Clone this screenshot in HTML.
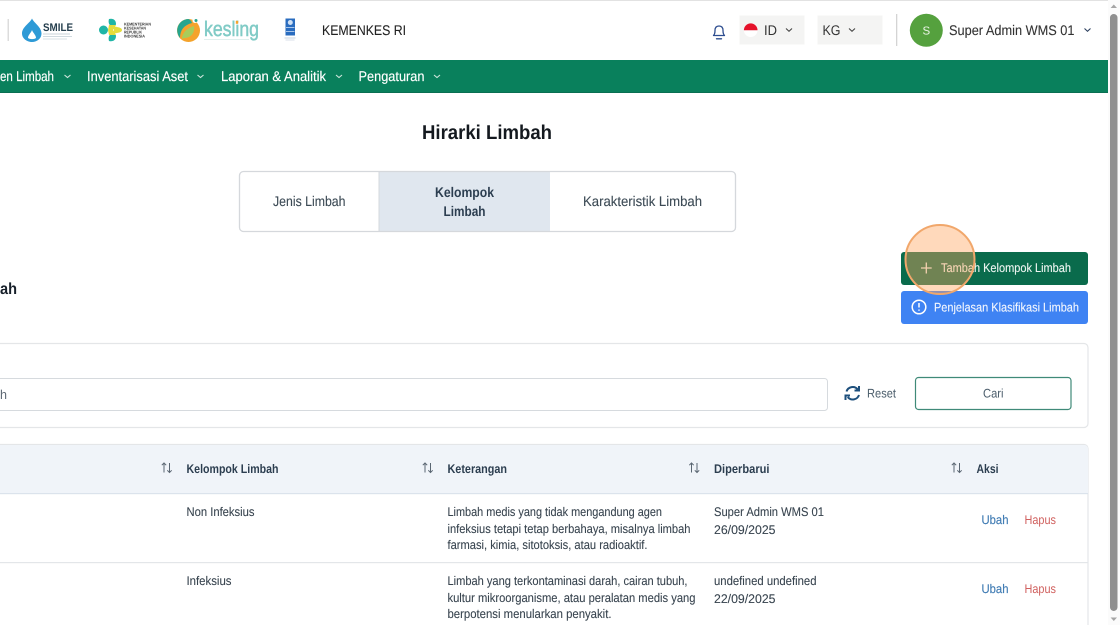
<!DOCTYPE html>
<html lang="id">
<head>
<meta charset="utf-8">
<title>Hirarki Limbah</title>
<style>
html,body{margin:0;padding:0;width:1120px;height:625px;overflow:hidden;background:#fff}
svg{display:block;font-family:"Liberation Sans",sans-serif}
text{text-rendering:geometricPrecision}
.n{font-size:14px;fill:#fff;stroke:#fff;stroke-width:.15}
.h{font-size:12.5px;font-weight:700;fill:#2c3e50}
.c{font-size:12.5px;fill:#38444f;stroke:#38444f;stroke-width:.1}
.t{font-size:14px;fill:#3c4a55;stroke:#3c4a55;stroke-width:.1}
.chev{fill:none;stroke-width:1.1}
.sort{fill:none;stroke:#5a6672;stroke-width:1}
</style>
</head>
<body>
<svg width="1120" height="625" viewBox="0 0 1120 625" xmlns="http://www.w3.org/2000/svg">
<rect width="1120" height="625" fill="#fff"/>
<rect width="1108" height="1" fill="#e2e2e2"/>

<!-- header logos -->
<rect x="7.500" y="19" width="1.500" height="22" fill="#dcdcdc"/>
<path d="M32 18.500C34 23 41.500 27 41.500 33.500C41.500 38.500 37 42 32 42C27 42 22 38.500 22 33.500C22 27 30 23 32 18.500Z" fill="#2e9ad6"/>
<path d="M32 30C33 33 36 35 36 38C34 39.500 30 39.500 28 38C28 35 31 33 32 30Z" fill="#fff"/>
<text x="43" y="31" font-size="11" font-weight="700" fill="#27404f" textLength="30" lengthAdjust="spacingAndGlyphs">SMILE</text>
<rect x="43" y="33.500" width="27" height="1" fill="#c8d3d8"/><rect x="43" y="36" width="29" height="1" fill="#d0dadf"/><rect x="43" y="38.500" width="24" height="1" fill="#d8e0e4"/>

<circle cx="103.500" cy="30" r="4.500" fill="#1fb5a6"/>
<path d="M109 19C113 18 116 20 116 24C116 26 113 27 111 26C109 25 108 22 109 19Z" fill="#1fb5a6"/>
<path d="M109 41C113 42 116 40 116 36C116 34 113 33 111 34C109 35 108 38 109 41Z" fill="#1fb5a6"/>
<path d="M111 26C116 27 122 27 122 30C122 33 116 33 111 34C113 32 114 31 114 30C114 29 113 28 111 26Z" fill="#e4dc3c"/>
<path d="M109 25L116 25L113 30L116 35L109 35L108 30Z" fill="#e4dc3c"/>
<g font-size="4" font-weight="700" fill="#3a3a3a">
<text x="124" y="25.500" textLength="27" lengthAdjust="spacingAndGlyphs">KEMENTERIAN</text>
<text x="124" y="29.500" textLength="22" lengthAdjust="spacingAndGlyphs">KESEHATAN</text>
<text x="124" y="33.500" textLength="18" lengthAdjust="spacingAndGlyphs">REPUBLIK</text>
<text x="124" y="37.500" textLength="21" lengthAdjust="spacingAndGlyphs">INDONESIA</text>
</g>

<circle cx="188.500" cy="30.500" r="11.500" fill="#f4a32c"/>
<path d="M188.500 19A11.500 11.500 0 0 0 180 38C180 30 184 25 192 23A6 6 0 0 0 188.500 19Z" fill="#25a58f"/>
<path d="M182 39C182 33 187 28 194 26C195 33 191 38 184 38Z" fill="#a8cc5a"/>
<circle cx="195" cy="20.500" r="2.500" fill="#fff"/>
<circle cx="196" cy="20.500" r="1.500" fill="#25a58f"/>
<text x="204" y="36" font-size="21" fill="#80cbc6" stroke="#80cbc6" stroke-width=".5" textLength="55" lengthAdjust="spacingAndGlyphs">kesling</text>
<rect x="235.800" y="20.800" width="2.400" height="3" fill="#f4a32c"/>
<rect x="204" y="39" width="45" height="1" fill="#e0f0ee"/>

<rect x="285.500" y="18.500" width="9.500" height="17" fill="#2a6cbf"/>
<circle cx="290.300" cy="22.500" r="2.500" fill="#cfe0f4"/>
<path d="M286 27.500h8.500M286 31.500h8.500" stroke="#a9c6ea" stroke-width="1"/>
<rect x="284.500" y="37.500" width="11" height="1" fill="#c7d3e0"/><rect x="285.500" y="39.500" width="9" height="1" fill="#d8dfe8"/>

<text x="322" y="35" font-size="14" fill="#222" stroke="#222" stroke-width=".1" textLength="84" lengthAdjust="spacingAndGlyphs">KEMENKES RI</text>

<!-- right header -->
<path d="M713.500 35.500C715 34 715 32 715 30.500C715 27.500 716.500 26 719 26C721.500 26 723 27.500 723 30.500C723 32 723 34 724.500 35.500Z" fill="none" stroke="#2d4d8f" stroke-width="1.300" stroke-linejoin="round"/>
<path d="M716.500 38.800H721.500" stroke="#2d4d8f" stroke-width="1.300" stroke-linecap="round"/>

<rect x="739.500" y="15.500" width="65" height="29" fill="#f4f4f3"/>
<circle cx="750.700" cy="30.200" r="6.800" fill="#fff"/>
<path d="M743.900 30.200A6.800 6.800 0 0 1 757.500 30.200Z" fill="#e5122a"/>
<text x="764" y="35" font-size="14" fill="#333" textLength="13" lengthAdjust="spacingAndGlyphs">ID</text>
<path d="M786 28.500l3 2.800 3-2.800" class="chev" stroke="#444"/>

<rect x="817.500" y="15.500" width="65" height="29" fill="#f4f4f3"/>
<text x="822.500" y="35" font-size="14" fill="#333" textLength="18" lengthAdjust="spacingAndGlyphs">KG</text>
<path d="M849 28.500l3 2.800 3-2.800" class="chev" stroke="#444"/>

<rect x="896" y="14" width="1.300" height="32" fill="#d4d4d4"/>
<circle cx="926.300" cy="30.300" r="16.500" fill="#55a13e"/>
<text x="926.300" y="34.500" font-size="11.500" fill="#e9f3e4" text-anchor="middle">S</text>
<text x="949" y="35" font-size="14" fill="#333" stroke="#333" stroke-width=".1" textLength="125.500" lengthAdjust="spacingAndGlyphs">Super Admin WMS 01</text>
<path d="M1084.500 28.500l3 2.800 3-2.800" class="chev" stroke="#2c3f5e" stroke-width="1.300"/>

<!-- nav -->
<rect y="60" width="1108" height="33" fill="#09805c"/>
<rect y="92" width="1108" height="1" fill="#0a6f52"/>
<text class="n" x="0" y="81" textLength="54" lengthAdjust="spacingAndGlyphs">en Limbah</text>
<path d="M64.500 75l3 2.500 3-2.500" class="chev" stroke="#cfe6dc"/>
<text class="n" x="87" y="81" textLength="101" lengthAdjust="spacingAndGlyphs">Inventarisasi Aset</text>
<path d="M197.500 75l3 2.500 3-2.500" class="chev" stroke="#cfe6dc"/>
<text class="n" x="221" y="81" textLength="105" lengthAdjust="spacingAndGlyphs">Laporan &amp; Analitik</text>
<path d="M336 75l3 2.500 3-2.500" class="chev" stroke="#cfe6dc"/>
<text class="n" x="358.500" y="81" textLength="66" lengthAdjust="spacingAndGlyphs">Pengaturan</text>
<path d="M434 75l3 2.500 3-2.500" class="chev" stroke="#cfe6dc"/>

<!-- title -->
<text x="422" y="139" font-size="20" font-weight="700" fill="#14191f" textLength="130" lengthAdjust="spacingAndGlyphs">Hirarki Limbah</text>

<!-- tabs -->
<rect x="379" y="172" width="171" height="59" fill="#e0e7ef"/>
<rect x="239.500" y="171.500" width="496" height="60" rx="4" fill="none" stroke="#d5d8dc" stroke-width="1.300"/>
<path d="M379 172V231" stroke="#d5d8dc"/>
<text class="t" x="273" y="206" textLength="72.500" lengthAdjust="spacingAndGlyphs">Jenis Limbah</text>
<text x="435" y="197" font-size="14" font-weight="700" fill="#2c3e50" textLength="59" lengthAdjust="spacingAndGlyphs">Kelompok</text>
<text x="443.500" y="216" font-size="14" font-weight="700" fill="#2c3e50" textLength="42" lengthAdjust="spacingAndGlyphs">Limbah</text>
<text class="t" x="583" y="206" textLength="119" lengthAdjust="spacingAndGlyphs">Karakteristik Limbah</text>

<!-- section title -->
<text x="0" y="294" font-size="16" font-weight="700" fill="#17202a" textLength="17" lengthAdjust="spacingAndGlyphs">ah</text>

<!-- buttons -->
<rect x="901" y="252" width="187" height="33" rx="3" fill="#0a6b4c"/>
<path d="M926.300 262.500v11M921 268h10.700" stroke="#e8f0ea" stroke-width="1.300"/>
<text x="941" y="272" font-size="12.500" fill="#edf5f1" stroke="#edf5f1" stroke-width=".12" textLength="130" lengthAdjust="spacingAndGlyphs">Tambah Kelompok Limbah</text>
<rect x="901" y="291" width="187" height="33" rx="3" fill="#3f83f3"/>
<circle cx="919" cy="307" r="6.800" fill="none" stroke="#fff" stroke-width="1.500"/>
<path d="M919 303v4.500M919 309.500v1.300" stroke="#fff" stroke-width="1.500"/>
<text x="934" y="311.500" font-size="12.500" fill="#f2f6fe" stroke="#f2f6fe" stroke-width=".12" textLength="145" lengthAdjust="spacingAndGlyphs">Penjelasan Klasifikasi Limbah</text>

<!-- search card -->
<rect x="-6" y="343.500" width="1094" height="84" rx="4" fill="#fff" stroke="#e4e6e8" stroke-width="1.200"/>
<rect x="-6" y="378.500" width="833.500" height="32" rx="3" fill="#fff" stroke="#d6dade" stroke-width="1"/>
<text x="0" y="399" font-size="13" fill="#5f6a75" textLength="7" lengthAdjust="spacingAndGlyphs">h</text>
<path d="M846.500 391.500A6.500 6.500 0 0 1 857.800 389.500M859 395A6.500 6.500 0 0 1 847.700 397" fill="none" stroke="#1d4f7c" stroke-width="2"/>
<path d="M859 386v4.500h-4.500M845.500 400v-4.500h4.500" fill="none" stroke="#1d4f7c" stroke-width="2"/>
<text x="867" y="397.500" font-size="12.500" fill="#4b5d6b" textLength="29" lengthAdjust="spacingAndGlyphs">Reset</text>
<rect x="915.500" y="377.500" width="155.500" height="32" rx="3" fill="#fff" stroke="#3f8a78" stroke-width="1.200"/>
<text x="983" y="397.500" font-size="12.500" fill="#4b5d6b" textLength="20.500" lengthAdjust="spacingAndGlyphs">Cari</text>

<!-- table -->
<rect x="-6" y="444.500" width="1094" height="200" rx="4" fill="#fff" stroke="#e4e6e8" stroke-width="1.200"/>
<path d="M-6 493V448.500Q-6 445 -2 445H1084Q1088 445 1088 449V493Z" fill="#f0f4f9"/>
<rect x="0" y="493" width="1088" height="1.200" fill="#dbe3ec"/>
<rect x="0" y="562" width="1088" height="1.200" fill="#e3e6e9"/>

<g>
<path class="sort" d="M164 472.500V463M161.800 465.200L164 463L166.200 465.200M169.500 463V472.500M167.300 470.300L169.500 472.500L171.700 470.300"/>
<path class="sort" d="M425 472.500V463M422.800 465.200L425 463L427.200 465.200M430.500 463V472.500M428.300 470.300L430.500 472.500L432.700 470.300"/>
<path class="sort" d="M691.500 472.500V463M689.300 465.200L691.500 463L693.700 465.200M697 463V472.500M694.800 470.300L697 472.500L699.200 470.300"/>
<path class="sort" d="M954 472.500V463M951.800 465.200L954 463L956.200 465.200M959.500 463V472.500M957.300 470.300L959.500 472.500L961.700 470.300"/>
</g>
<text class="h" x="186.500" y="473" textLength="92" lengthAdjust="spacingAndGlyphs">Kelompok Limbah</text>
<text class="h" x="447.500" y="473" textLength="59.500" lengthAdjust="spacingAndGlyphs">Keterangan</text>
<text class="h" x="714" y="473" textLength="55.500" lengthAdjust="spacingAndGlyphs">Diperbarui</text>
<text class="h" x="976.500" y="473" textLength="22" lengthAdjust="spacingAndGlyphs">Aksi</text>

<text class="c" x="186.500" y="516" textLength="68" lengthAdjust="spacingAndGlyphs">Non Infeksius</text>
<text class="c" x="447.500" y="516" textLength="214.500" lengthAdjust="spacingAndGlyphs">Limbah medis yang tidak mengandung agen</text>
<text class="c" x="447.500" y="533" textLength="243" lengthAdjust="spacingAndGlyphs">infeksius tetapi tetap berbahaya, misalnya limbah</text>
<text class="c" x="447.500" y="549" textLength="200" lengthAdjust="spacingAndGlyphs">farmasi, kimia, sitotoksis, atau radioaktif.</text>
<text class="c" x="714" y="516" textLength="110" lengthAdjust="spacingAndGlyphs">Super Admin WMS 01</text>
<text class="c" x="714" y="534" textLength="61.500" lengthAdjust="spacingAndGlyphs">26/09/2025</text>
<text x="981.500" y="524" font-size="12.500" fill="#3f7bb3" stroke="#3f7bb3" stroke-width=".15" textLength="27" lengthAdjust="spacingAndGlyphs">Ubah</text>
<text x="1024.500" y="524" font-size="12.500" fill="#d0605e" textLength="31.500" lengthAdjust="spacingAndGlyphs">Hapus</text>

<text class="c" x="186.500" y="585" textLength="45" lengthAdjust="spacingAndGlyphs">Infeksius</text>
<text class="c" x="447.500" y="585" textLength="240" lengthAdjust="spacingAndGlyphs">Limbah yang terkontaminasi darah, cairan tubuh,</text>
<text class="c" x="447.500" y="602" textLength="248" lengthAdjust="spacingAndGlyphs">kultur mikroorganisme, atau peralatan medis yang</text>
<text class="c" x="447.500" y="618" textLength="164" lengthAdjust="spacingAndGlyphs">berpotensi menularkan penyakit.</text>
<text class="c" x="714" y="585" textLength="102.500" lengthAdjust="spacingAndGlyphs">undefined undefined</text>
<text class="c" x="714" y="603" textLength="61.500" lengthAdjust="spacingAndGlyphs">22/09/2025</text>
<text x="981.500" y="593" font-size="12.500" fill="#3f7bb3" stroke="#3f7bb3" stroke-width=".15" textLength="27" lengthAdjust="spacingAndGlyphs">Ubah</text>
<text x="1024.500" y="593" font-size="12.500" fill="#d0605e" textLength="31.500" lengthAdjust="spacingAndGlyphs">Hapus</text>

<!-- click highlight -->
<circle cx="940" cy="259.500" r="34.500" fill="#ffa45c" fill-opacity=".42" stroke="#f1a76b" stroke-width="2"/>

<!-- scrollbar -->
<rect x="1108" y="0" width="12" height="625" fill="#fbfbfb"/>
<path d="M1113.800 4.500l3.200 3.500h-6.400z" fill="#a5a5a5"/>
<rect x="1110" y="14" width="7.500" height="597" rx="3.700" fill="#8f8f8f"/>
<path d="M1113.800 621l3.200-3.500h-6.400z" fill="#a5a5a5"/>
</svg>
</body>
</html>
